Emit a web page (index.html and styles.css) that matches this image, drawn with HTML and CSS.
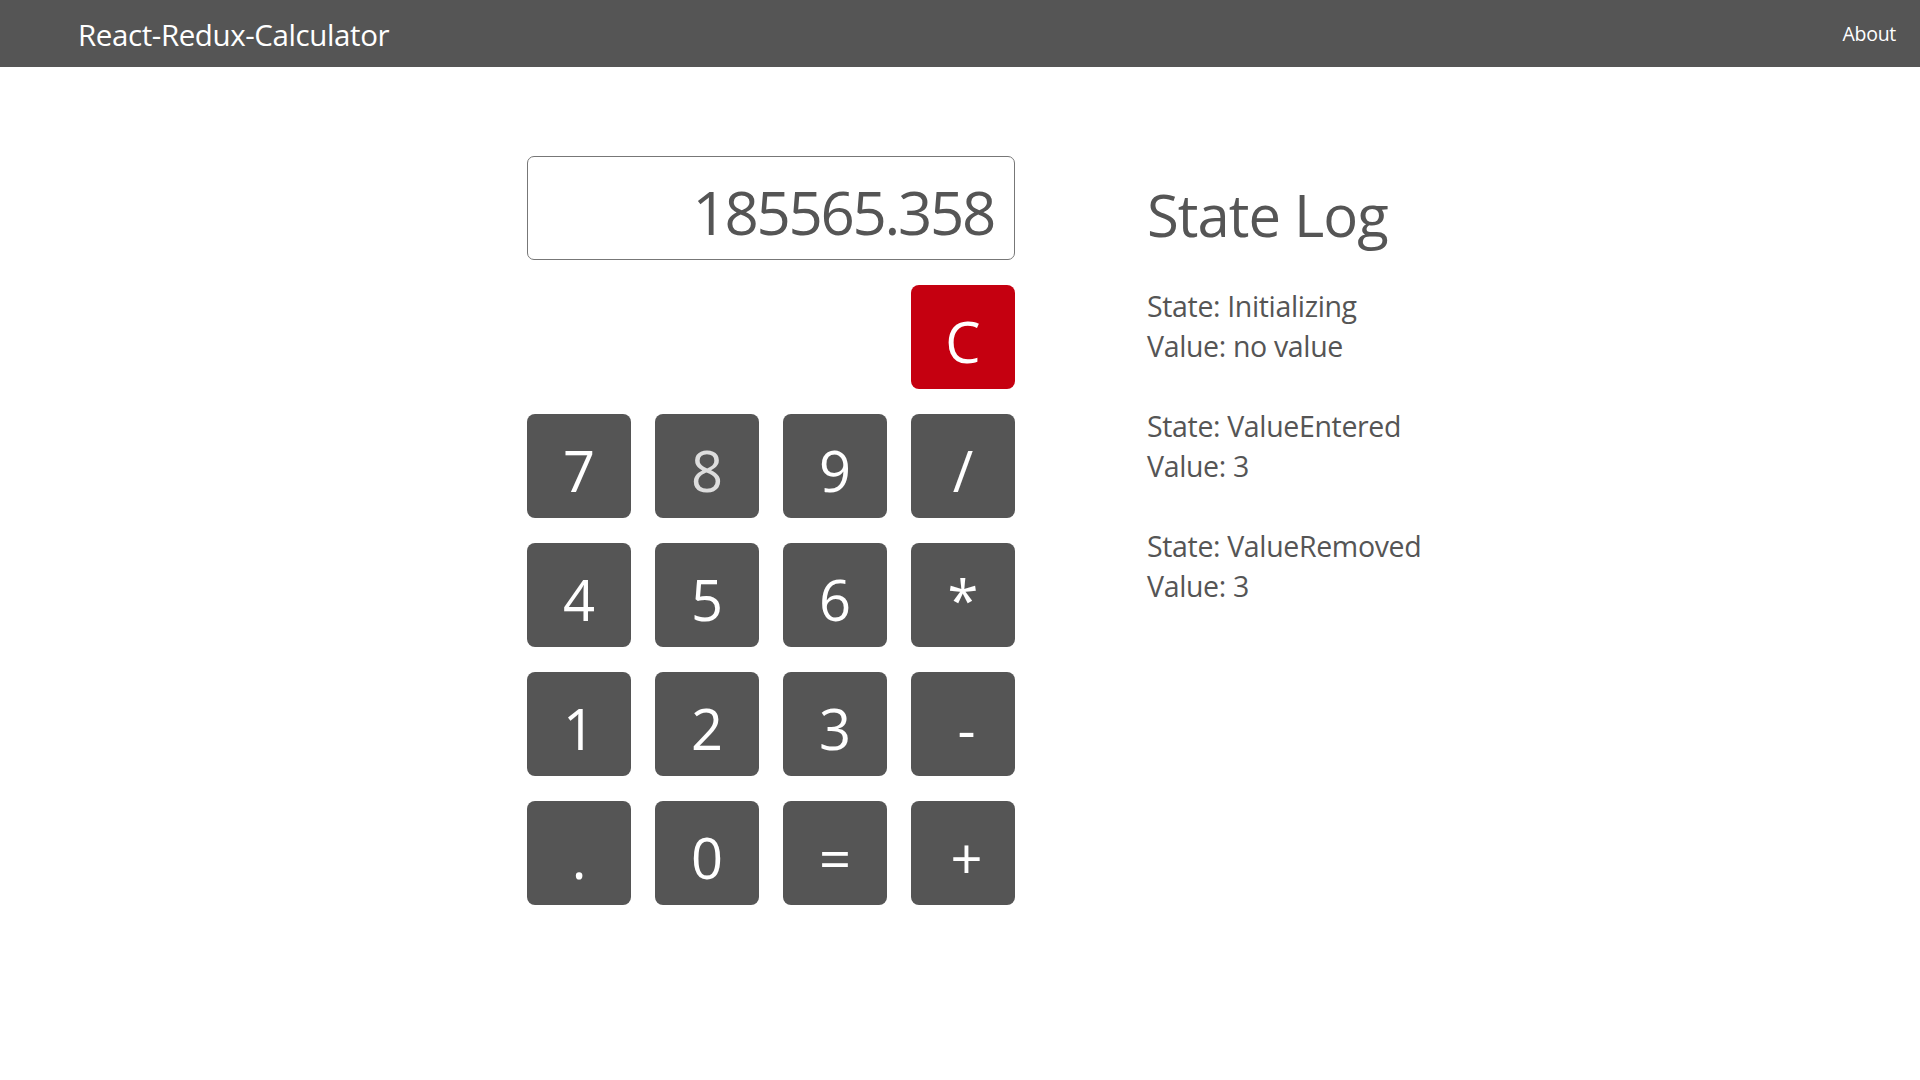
FILE: index.html
```html
<!DOCTYPE html>
<html>
<head>
<meta charset="utf-8">
<title>React-Redux-Calculator</title>
<link rel="stylesheet" href="styles.css">
</head>
<body>
<header class="topbar">
  <div class="brand">React-Redux-Calculator</div>
  <a class="about" href="#">About</a>
</header>
<main class="page">
  <section class="calc">
    <div class="display">185565.358</div>
    <div class="keys">
      <button class="key clear">C</button>
      <button class="key">7</button>
      <button class="key hover">8</button>
      <button class="key">9</button>
      <button class="key">/</button>
      <button class="key">4</button>
      <button class="key">5</button>
      <button class="key">6</button>
      <button class="key">*</button>
      <button class="key">1</button>
      <button class="key">2</button>
      <button class="key">3</button>
      <button class="key shift">-</button>
      <button class="key">.</button>
      <button class="key">0</button>
      <button class="key">=</button>
      <button class="key shift">+</button>
    </div>
  </section>
  <section class="log">
    <h1 class="log-title">State Log</h1>
    <div class="entry">
      <div>State: Initializing</div>
      <div>Value: no value</div>
    </div>
    <div class="entry">
      <div>State: ValueEntered</div>
      <div>Value: 3</div>
    </div>
    <div class="entry">
      <div>State: ValueRemoved</div>
      <div>Value: 3</div>
    </div>
  </section>
</main>
</body>
</html>
```
FILE: styles.css
```css
* { box-sizing: border-box; }
body {
  margin: 0;
  font-family: "Open Sans", "Noto Sans", sans-serif;
  color: #555;
  background: #fff;
}
.topbar {
  height: 67px;
  background: #555555;
  display: flex;
  align-items: center;
  justify-content: space-between;
  padding: 0 24px 0 78px;
}
.brand {
  color: #fff;
  font-size: 29.5px;
  letter-spacing: -0.4px;
  line-height: 1;
  margin-top: 2px;
}
.about {
  color: #fff;
  text-decoration: none;
  font-size: 19.5px;
  letter-spacing: -0.3px;
  line-height: 1;
  margin-top: 1px;
}
.page {
  display: flex;
  align-items: flex-start;
  padding-left: 527px;
}
.calc {
  width: 488px;
  padding-top: 89px;
}
.display {
  height: 104px;
  border: 1px solid #777;
  border-radius: 7px;
  text-align: right;
  font-size: 60px;
  letter-spacing: -2.3px;
  line-height: 110px;
  padding-right: 20px;
  color: #555;
}
.keys {
  margin-top: 25px;
  display: grid;
  grid-template-columns: repeat(4, 104px);
  column-gap: 24px;
  row-gap: 25px;
}
.key {
  width: 104px;
  height: 104px;
  border: none;
  border-radius: 8px;
  background: #555555;
  color: #fff;
  font-family: "Open Sans", "Noto Sans", sans-serif;
  font-size: 56px;
  line-height: 1;
  padding: 8px 0 0;
  display: flex;
  align-items: center;
  justify-content: center;
}
.key.shift { padding-left: 7px; }
.key.hover { color: #ddd; }
.key.clear {
  grid-column: 4;
  background: #c50010;
}
.log {
  margin-left: 132px;
  padding-top: 119px;
}
.log-title {
  margin: 0 0 42px;
  font-weight: 400;
  font-size: 58px;
  letter-spacing: -1px;
  line-height: 1;
  color: #555;
}
.entry {
  font-size: 28.5px;
  letter-spacing: -0.35px;
  line-height: 40px;
  margin-bottom: 40px;
  color: #555;
}
```
